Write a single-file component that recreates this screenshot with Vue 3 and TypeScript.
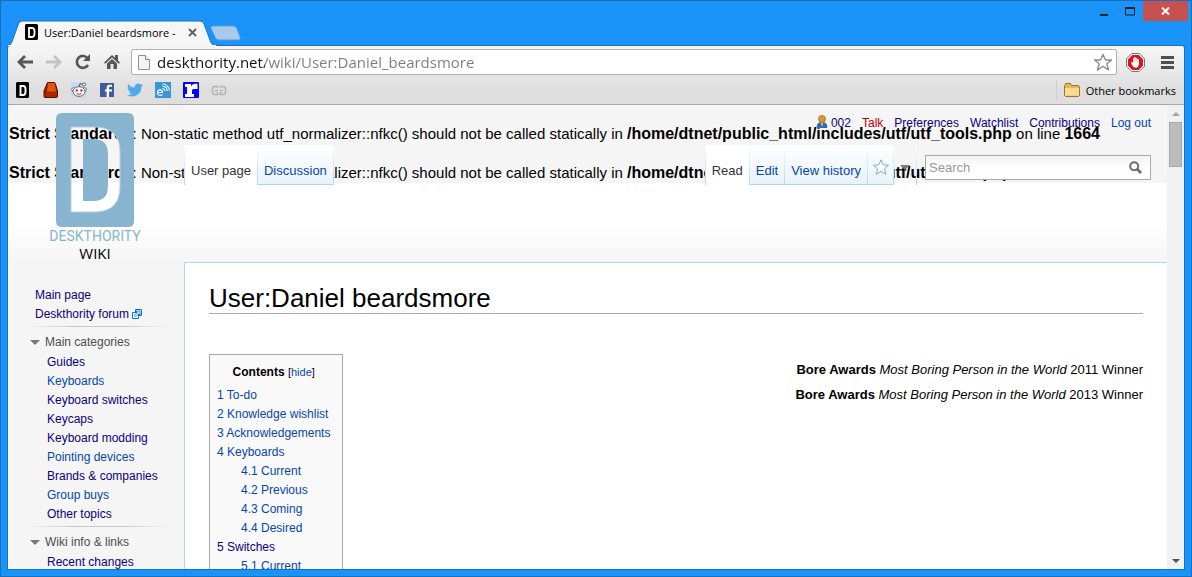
<script setup lang="ts">
import { ref } from 'vue'

interface LinkItem {
  label: string
  fresh?: boolean
}
interface TocItem {
  num: string
  label: string
  sub?: boolean
  visited?: boolean
}

const address = ref('deskthority.net/wiki/User:Daniel_beardsmore')
const query = ref('')

const notice = {
  title: 'Strict Standards',
  body: 'Non-static method utf_normalizer::nfkc() should not be called statically in',
  file: '/home/dtnet/public_html/includes/utf/utf_tools.php',
  line: '1664',
}

const topLinks: LinkItem[] = [{ label: 'Main page' }]

const categories: LinkItem[] = [
  { label: 'Guides' },
  { label: 'Keyboards', fresh: true },
  { label: 'Keyboard switches' },
  { label: 'Keycaps' },
  { label: 'Keyboard modding' },
  { label: 'Pointing devices', fresh: true },
  { label: 'Brands & companies' },
  { label: 'Group buys', fresh: true },
  { label: 'Other topics' },
]

const toc: TocItem[] = [
  { num: '1', label: 'To-do' },
  { num: '2', label: 'Knowledge wishlist' },
  { num: '3', label: 'Acknowledgements' },
  { num: '4', label: 'Keyboards' },
  { num: '4.1', label: 'Current', sub: true },
  { num: '4.2', label: 'Previous', sub: true },
  { num: '4.3', label: 'Coming', sub: true },
  { num: '4.4', label: 'Desired', sub: true },
  { num: '5', label: 'Switches', visited: true },
  { num: '5.1', label: 'Current', sub: true },
]

const awards = ['2011', '2013']
</script>

<template>
  <div class="window">
    <header class="titlebar">
      <div class="tab">
        <svg class="tab-shape" viewBox="0 0 208 26" preserveAspectRatio="none" aria-hidden="true">
          <path d="M0 26 C3 25 4 22 5 19 L10 5 C11 2 12 1 15 1 H191 C194 1 195 2 196 4 L202 20 C203 24 205 25 208 26 Z" fill="#f6f6f6" stroke="#1b6fb5" stroke-width="1" />
          <rect x="0" y="25" width="208" height="1" fill="#f6f6f6" />
        </svg>
        <svg class="favicon" width="13" height="16" viewBox="0 0 13 16" aria-hidden="true">
          <path d="M1 0H12L13 1V15L12 16H1L0 15V1Z" fill="#000" />
          <path d="M4 4H7C9 4 9.500 5 9.500 7V9.500C9.500 12 9 13 7 13H4Z" fill="none" stroke="#fff" stroke-width="1.800" />
        </svg>
        <span class="tab-title">User:Daniel beardsmore -</span>
        <button class="tab-close" aria-label="Close tab">
          <svg width="9" height="9" viewBox="0 0 9 9"><path d="M1 1L8 8M8 1L1 8" stroke="#5f5f5f" stroke-width="1.800" /></svg>
        </button>
      </div>
      <button class="new-tab" aria-label="New tab">
        <svg width="32" height="16" viewBox="0 0 32 16"><path d="M3 1H23C25 1 26 2 27 4L30 12C30.500 14 30 15 28 15H9C7 15 6 14 5 12L1 3C1 2 1.500 1 3 1Z" fill="#a9cae8" stroke="#5f9fd4" /></svg>
      </button>
      <div class="controls">
        <button aria-label="Minimize"><svg width="9" height="12" viewBox="0 0 9 12"><rect y="9" width="8" height="2" fill="#1e1e1e" /></svg></button>
        <button aria-label="Maximize"><svg width="10" height="9" viewBox="0 0 10 9"><path d="M.5 1H9.500V8H.5Z" fill="none" stroke="#1e1e1e" /><rect width="10" height="2" fill="#1e1e1e" /></svg></button>
        <button class="close" aria-label="Close"><svg width="9" height="8" viewBox="0 0 9 8"><path d="M1 .5L8 7.500M8 .5L1 7.500" stroke="#fff" stroke-width="2" /></svg></button>
      </div>
    </header>

    <div class="frame">
      <div class="toolbar">
        <button class="nav" aria-label="Back"><svg width="16" height="14" viewBox="0 0 16 14"><path d="M8 1L2 7L8 13M2 7H16" fill="none" stroke="#555" stroke-width="2.800" /></svg></button>
        <button class="nav" aria-label="Forward"><svg width="16" height="14" viewBox="0 0 16 14"><path d="M8 1L14 7L8 13M14 7H0" fill="none" stroke="#c3c3c3" stroke-width="2.800" /></svg></button>
        <button class="nav" aria-label="Reload"><svg width="16" height="16" viewBox="0 0 16 16"><path d="M12.800 4.500A6 6 0 1 0 13 11" fill="none" stroke="#555" stroke-width="2.600" /><path d="M15 0V7H8Z" fill="#555" /></svg></button>
        <button class="nav" aria-label="Home"><svg width="16" height="16" viewBox="0 0 16 16"><path d="M8 1L0 8.500L1.200 9.800L8 3.500L14.800 9.800L16 8.500L14 6.600V1H11V3.800Z" fill="#555" /><path d="M8 5L3 9.600V15H6.500V10H9.500V15H13V9.600Z" fill="#555" /></svg></button>
        <label class="omnibox">
          <svg width="12" height="15" viewBox="0 0 12 15" aria-hidden="true"><path d="M.5 .5H7.500L11.500 4.500V14.500H.5Z" fill="#f3f3f3" stroke="#8f8f8f" /><path d="M7.500 .5V4.500H11.500" fill="#fff" stroke="#8f8f8f" /></svg>
          <input v-model="address" type="text" aria-label="Address" spellcheck="false" />
          <svg width="20" height="19" viewBox="0 0 20 19" aria-hidden="true"><path d="M10 1.500L12.500 7H18.500L13.800 10.800L15.600 17L10 13.400L4.400 17L6.200 10.800L1.500 7H7.500Z" fill="#fff" stroke="#8b8b8b" stroke-width="1.400" stroke-linejoin="round" /></svg>
        </label>
        <button class="nav blocker" aria-label="Ad blocker">
          <svg width="19" height="19" viewBox="0 0 19 19"><path d="M5.700 .5H13.300L18.500 5.700V13.300L13.300 18.500H5.700L.5 13.300V5.700Z" fill="#f8f8f8" stroke="#777" /><path d="M6.300 2H12.700L17 6.300V12.700L12.700 17H6.300L2 12.700V6.300Z" fill="#d8141c" /><path d="M5 9.500L6.200 9L7 10V5.500L8 5L8.300 4.200H9.500L10 5H11L11.500 6H12.700L13 7V11.500L11.500 14.500H8L6 12Z" fill="#fff" /><path d="M8.400 5.500V9M10 5V9M11.500 6V9" stroke="#e88" stroke-width=".5" /></svg>
        </button>
        <button class="nav menu" aria-label="Menu"><svg width="13" height="13" viewBox="0 0 13 13"><path d="M0 1.500H13M0 6.500H13M0 11.500H13" stroke="#4f4f4f" stroke-width="3" /></svg></button>
      </div>

      <nav class="bookmarks" aria-label="Bookmarks">
        <a href="#" aria-label="Deskthority"><svg width="16" height="16" viewBox="0 0 16 16"><path d="M2 0H13L14 1V15L13 16H2L1 15V1Z" fill="#000" /><path d="M5.500 4H8C10 4 10.500 5 10.500 7V9.500C10.500 12 10 13 8 13H5.500Z" fill="none" stroke="#fff" stroke-width="1.900" /></svg></a>
        <a href="#" aria-label="Keycap"><svg width="16" height="16" viewBox="0 0 16 16"><path d="M4 1.500Q4 .5 5 .5H11Q12 .5 12.300 1.500L14.500 9V14.500Q14.500 15.500 13.500 15.500H2Q1 15.500 1 14.500V9Z" fill="#b02500" stroke="#471306" /><path d="M5 1H11.500L13 9.500H4Z" fill="#e4560d" /><path d="M4.500 1L1.500 9.500V13L4 9.500Z" fill="#8f1800" /></svg></a>
        <a href="#" aria-label="Reddit"><svg width="16" height="16" viewBox="0 0 16 16"><rect width="16" height="16" fill="#c5dbf0" /><path d="M8 5L9 1.500L12 2.500" fill="none" stroke="#555" /><circle cx="13" cy="2.500" r="1.500" fill="#fff" stroke="#555" stroke-width=".8" /><circle cx="2.500" cy="7.500" r="1.800" fill="#fff" stroke="#555" stroke-width=".8" /><circle cx="13.500" cy="7.500" r="1.800" fill="#fff" stroke="#555" stroke-width=".8" /><ellipse cx="8" cy="9.500" rx="6" ry="4.800" fill="#fff" stroke="#555" stroke-width=".9" /><circle cx="5.700" cy="8.500" r="1.300" fill="#f03030" /><circle cx="10.300" cy="8.500" r="1.300" fill="#f03030" /><path d="M5.500 11.500Q8 13 10.500 11.500" fill="none" stroke="#555" /></svg></a>
        <a href="#" aria-label="Facebook"><svg width="16" height="16" viewBox="0 0 16 16"><rect x="1" y="1" width="14" height="14" fill="#3f5c9d" /><path d="M10 15V9.500H13V7.500H10V6C10 5 10.500 4.700 11.300 4.700H13V2.700H10.500C8.500 2.700 7.700 4 7.700 5.500V7.500H6V9.500H7.700V15Z" fill="#fff" /></svg></a>
        <a href="#" aria-label="Twitter"><svg width="16" height="16" viewBox="0 0 24 24"><path d="M23.900 4.600a10 10 0 0 1-2.800.8 5 5 0 0 0 2.100-2.700c-1 .6-2 1-3.100 1.200a4.900 4.900 0 0 0-8.400 4.500A14 14 0 0 1 1.700 3.200a4.900 4.900 0 0 0 1.500 6.500 5 5 0 0 1-2.200-.6 4.900 4.900 0 0 0 3.900 4.900 5 5 0 0 1-2.200.1 4.900 4.900 0 0 0 4.600 3.400A9.900 9.900 0 0 1 0 19.500 14 14 0 0 0 21.500 7.100a10 10 0 0 0 2.400-2.500z" fill="#4fa9ea" /></svg></a>
        <a href="#" aria-label="Feed"><svg width="16" height="16" viewBox="0 0 16 16"><rect width="16" height="16" fill="#3795da" /><path d="M2.500 10.500H7.500C7.500 7 2.500 7 2.500 10.500C2.500 14 6 13.500 7.500 12.800M7.500 6.500A3 3 0 0 1 10 9M7.500 4A5.500 5.500 0 0 1 12.300 9M7.500 1.800A7.500 7.500 0 0 1 14.500 9" fill="none" stroke="#fff" stroke-width="1.100" /></svg></a>
        <a href="#" aria-label="Forum"><svg width="16" height="16" viewBox="0 0 16 16"><rect width="16" height="16" rx="1" fill="#0505f5" /><path d="M2 2H8V4.500C9 2.500 11 1.500 14.500 2V7H11C9.500 7 9 7.500 9 9V12H11V15H2V12H4V5H2Z" fill="#fff" /></svg></a>
        <a href="#" aria-label="Links"><svg width="16" height="16" viewBox="0 0 16 16"><path d="M6.500 6V4.500H3L1.500 6V11L3 12.500H6.500V10M4 8.500H7M9.500 6V4.500H13L14.500 6V11L13 12.500H9.500V10M9 8.500H12" fill="none" stroke="#b2b2b2" stroke-width="1.400" /></svg></a>
        <button class="other">
          <svg width="16" height="14" viewBox="0 0 16 14" aria-hidden="true"><path d="M.5 12.500V2.500L1.500 1.500V.5H6.500L7.500 2.500H14L15.500 3.500V12L14.500 13.500H1.500Z" fill="#e9b558" stroke="#9b7434" /><path d="M1 5H15V12.500H1Z" fill="#fbdc95" /></svg>
          Other bookmarks
        </button>
      </nav>

      <div class="viewport">
        <div class="page">
          <div class="notices">
            <p v-for="n in 2" :key="n">
              <b>{{ notice.title }}</b>: {{ notice.body }} <b>{{ notice.file }}</b> on line <b>{{ notice.line }}</b>
            </p>
          </div>
          <div class="base"></div>

          <div class="columns">
            <aside class="sidebar">
              <ul class="top-links">
                <li v-for="l in topLinks" :key="l.label"><a href="#">{{ l.label }}</a></li>
                <li>
                  <a href="#">Deskthority forum
                    <svg width="10" height="10" viewBox="0 0 10 10" aria-hidden="true"><path d="M3.500 .5H9.500V6.500H3.500Z" fill="#fff" stroke="#0d6fd8" /><path d="M.5 3.500H6.500V9.500H.5Z" fill="#fff" stroke="#0d6fd8" /><path d="M4 2H8V6L6.700 4.700L3.700 7.700L2.300 6.300L5.300 3.300Z" fill="#fff" stroke="#0d6fd8" stroke-width=".9" /></svg>
                  </a>
                </li>
              </ul>
              <section>
                <h2>Main categories</h2>
                <ul>
                  <li v-for="l in categories" :key="l.label"><a href="#" :class="{ fresh: l.fresh }">{{ l.label }}</a></li>
                </ul>
              </section>
              <section>
                <h2>Wiki info &amp; links</h2>
                <ul>
                  <li><a href="#">Recent changes</a></li>
                </ul>
              </section>
            </aside>

            <main class="content">
              <h1>User:Daniel beardsmore</h1>
              <div class="body">
                <div class="toc">
                  <div class="toc-title"><b>Contents</b> <small>[<a href="#">hide</a>]</small></div>
                  <ul>
                    <li v-for="t in toc" :key="t.num" :class="{ sub: t.sub }">
                      <a href="#" :class="{ visited: t.visited }">{{ t.num }} {{ t.label }}</a>
                    </li>
                  </ul>
                </div>
                <div class="awards">
                  <p v-for="year in awards" :key="year"><b>Bore Awards</b> <i>Most Boring Person in the World</i> {{ year }} Winner</p>
                </div>
              </div>
            </main>
          </div>

          <div class="head">
            <a href="#" class="logo" aria-label="Deskthority wiki">
              <svg width="78" height="114" viewBox="0 0 78 114" aria-hidden="true">
                <path fill-rule="evenodd" fill="#88b4cf" d="M6 0H72Q78 0 78 6V108Q78 114 72 114H6Q0 114 0 108V6Q0 0 6 0ZM15 14V99H38C56 99 64 90 64 73V39C64 23 56 14 38 14ZM27 26V88H37C48 88 52 83 52 72V42C52 31 48 26 37 26Z" />
                <path fill="none" stroke="#b5d0e1" d="M15 14V99H38C56 99 64 90 64 73V39C64 23 56 14 38 14Z" />
              </svg>
              <span class="brand">DESKTHORITY</span>
              <span class="wiki">WIKI</span>
            </a>
            <div class="head-main">
              <nav class="personal">
                <a href="#" class="me">
                  <svg width="12" height="14" viewBox="0 0 12 14" aria-hidden="true"><path d="M1 13C0 10 2 7 6 7S12 10 11 13Z" fill="#3568a5" /><path d="M5 8L6 12L7 8Z" fill="#dce8f4" /><circle cx="6" cy="4" r="3.500" fill="#dd9a35" stroke="#a56c19" stroke-width=".8" /></svg>
                  002
                </a>
                <a href="#" class="missing">Talk</a>
                <a href="#">Preferences</a>
                <a href="#">Watchlist</a>
                <a href="#">Contributions</a>
                <a href="#" class="fresh">Log out</a>
              </nav>
              <div class="tabs">
                <a href="#" class="selected first">User page</a>
                <a href="#">Discussion</a>
                <span class="spacer"></span>
                <a href="#" class="selected first">Read</a>
                <a href="#">Edit</a>
                <a href="#">View history</a>
                <a href="#" class="star" aria-label="Watch"><svg width="16" height="16" viewBox="0 0 16 16"><path d="M8 .8L10.200 5.800L15.500 6.300L11.500 9.800L12.700 15.200L8 12.400L3.300 15.200L4.500 9.800L.5 6.300L5.800 5.800Z" fill="#fff" stroke="#7aa9bd" stroke-linejoin="round" /></svg></a>
                <button class="more" aria-label="More"><svg width="10" height="5" viewBox="0 0 10 5"><path d="M0 0H10L5 5Z" fill="#797979" /></svg></button>
                <form class="search" @submit.prevent>
                  <input v-model="query" type="text" placeholder="Search" aria-label="Search" />
                  <button aria-label="Go"><svg width="13" height="13" viewBox="0 0 13 13"><circle cx="5.200" cy="5.200" r="4" fill="none" stroke="#6c6c6c" stroke-width="2" /><path d="M8 8L12 12" stroke="#6c6c6c" stroke-width="2.600" /></svg></button>
                </form>
              </div>
            </div>
          </div>
        </div>

        <div class="scrollbar">
          <button aria-label="Scroll up"><svg width="8" height="4" viewBox="0 0 8 4"><path d="M4 0L8 4H0Z" fill="#a3a3a3" /></svg></button>
          <div class="thumb"></div>
          <button aria-label="Scroll down"><svg width="8" height="4" viewBox="0 0 8 4"><path d="M0 0H8L4 4Z" fill="#505050" /></svg></button>
        </div>
      </div>
    </div>
  </div>
</template>

<style>
body {
  margin: 0;
  overflow: hidden;
}
</style>

<style scoped>
* {
  box-sizing: border-box;
}
button {
  border: 0;
  padding: 0;
  background: none;
  font: inherit;
  color: inherit;
}
svg {
  display: block;
  flex: none;
}
a {
  color: #0645ad;
  text-decoration: none;
}
ul {
  list-style: none;
  margin: 0;
  padding: 0;
}
p {
  margin: 0;
}
.window {
  height: 100vh;
  display: flex;
  flex-direction: column;
  background: #1a94fa;
  border: 1px solid #1a70b8;
  padding: 0 6px 6px;
  font-family: "Segoe UI", "Open Sans", sans-serif;
  font-size: 11px;
  color: #000;
}
.titlebar {
  height: 44px;
  display: flex;
  align-items: flex-end;
  flex: none;
}
.tab {
  position: relative;
  width: 208px;
  height: 26px;
  margin-left: 1px;
  margin-bottom: -1px;
  padding: 0 19px 2px 17px;
  display: flex;
  align-items: center;
  z-index: 1;
}
.tab-shape {
  position: absolute;
  inset: 0;
  width: 100%;
  height: 100%;
}
.favicon,
.tab-title,
.tab-close {
  position: relative;
}
.tab-title {
  flex: 1;
  margin-left: 6px;
  white-space: nowrap;
}
.new-tab {
  margin: 0 0 4px -6px;
}
.controls {
  align-self: flex-start;
  margin-left: auto;
  margin-right: -3px;
  display: flex;
  height: 20px;
}
.controls button {
  width: 26px;
  display: grid;
  place-items: center;
}
.controls .close {
  width: 45px;
  background: #c75050;
}
.frame {
  flex: 1;
  min-height: 0;
  display: flex;
  flex-direction: column;
  border: 1px solid #1b6fb5;
  border-radius: 3px 3px 0 0;
  background: linear-gradient(#f6f6f6, #dedede 45px);
}
.toolbar {
  height: 32px;
  flex: none;
  display: flex;
  align-items: center;
  padding: 0 10px 0 9px;
  gap: 13px;
}
.nav:nth-child(4) {
  margin-right: -2px;
}
.omnibox {
  flex: 1;
  height: 26px;
  display: flex;
  align-items: center;
  gap: 7px;
  padding: 0 3px 0 6px;
  border: 1px solid #b0b0b0;
  border-radius: 2px;
  background: #fff;
}
.omnibox input {
  flex: 1;
  min-width: 0;
  border: 0;
  padding: 0;
  outline: 0;
  font: 15px/22px "Segoe UI", "Open Sans", sans-serif;
  color: transparent;
  background: linear-gradient(90deg, #111 108px, #7c7c7c 108px);
  background-clip: text;
  -webkit-background-clip: text;
}
.blocker {
  margin-left: -4px;
}
.menu {
  margin-left: 3px;
}
.bookmarks {
  height: 27px;
  flex: none;
  display: flex;
  align-items: center;
  gap: 12px;
  padding: 0 8px 2px 7px;
  border-bottom: 1px solid #aaa8ab;
}
.other {
  display: flex;
  align-items: center;
  gap: 6px;
  height: 20px;
  margin-left: auto;
  padding-left: 7px;
  border-left: 1px solid #c5d0d8;
}
.viewport {
  flex: 1;
  min-height: 0;
  display: flex;
  background: #f5f5f5;
  font-family: "Liberation Sans", Arial, sans-serif;
  font-size: 12px;
}
.page {
  position: relative;
  flex: 1;
  min-width: 0;
  overflow: hidden;
}
.notices {
  height: 78px;
  padding: 19px 1px 0;
  overflow: hidden;
  white-space: nowrap;
  font-size: 15px;
  line-height: 19px;
}
.notices b {
  font-size: 16px;
}
.notices p + p {
  margin-top: 20px;
}
.base {
  height: 79px;
  background: linear-gradient(#fff 50%, #f5f5f5);
}
.columns {
  display: grid;
  grid-template-columns: 176px 1fr;
}
.sidebar {
  padding: 24px 14px 0 19px;
  line-height: 19px;
  white-space: nowrap;
}
.sidebar a,
.personal a {
  color: #0b0080;
}
.sidebar a.fresh,
.personal a.fresh {
  color: #0645ad;
}
.sidebar .top-links {
  padding-left: 8px;
}
.top-links svg {
  display: inline-block;
  vertical-align: -1px;
}
.sidebar section {
  margin-top: 2px;
  padding-top: 7px;
  background: linear-gradient(90deg, transparent, #c8c8c8 33%, #c8c8c8 66%, transparent) no-repeat 0 0 / 100% 1px;
}
.sidebar h2 {
  display: flex;
  align-items: center;
  gap: 5px;
  margin: 0 0 1px 3px;
  font-size: 12px;
  font-weight: normal;
  color: #4d4d4d;
}
.sidebar h2::before {
  content: "";
  border: 5px solid transparent;
  border-top-color: #797979;
  border-bottom: 0;
}
.sidebar section ul {
  padding-left: 20px;
}
.content {
  background: #fff;
  border: 1px solid #a7d7f9;
  border-right: 0;
  padding: 20px 24px 24px;
}
h1 {
  margin: 0 0 40px;
  border-bottom: 1px solid #aaa;
  font-size: 26px;
  line-height: 30px;
  font-weight: normal;
}
.body {
  display: flex;
  justify-content: space-between;
  align-items: flex-start;
}
.toc {
  border: 1px solid #aaa;
  background: #f9f9f9;
  padding: 8px 12px 8px 7px;
  line-height: 19px;
}
.toc-title {
  text-align: center;
  margin-bottom: 4px;
}
.toc-title small {
  font-size: 11px;
}
.toc .sub {
  padding-left: 24px;
}
.toc .visited {
  color: #0b0080;
}
.awards {
  font-size: 13px;
  line-height: 19px;
  padding-top: 6px;
  text-align: right;
}
.awards p + p {
  margin-top: 6px;
}
.head {
  position: absolute;
  inset: 0 0 auto 0;
  display: flex;
}
.logo {
  width: 176px;
  flex: none;
  display: flex;
  flex-direction: column;
  align-items: center;
  padding: 8px 2px 0 0;
  color: #88b4cf;
}
.brand {
  font-family: "Liberation Sans Narrow", Roboto, sans-serif;
  font-size: 14px;
  line-height: 18px;
}
.wiki {
  font-family: "Open Sans", sans-serif;
  font-size: 15px;
  line-height: 16px;
  color: #000;
}
.head-main {
  flex: 1;
  min-width: 0;
  padding-right: 16px;
}
.personal {
  height: 40px;
  display: flex;
  justify-content: flex-end;
  gap: 11px;
  padding-top: 10px;
  line-height: 16px;
}
.personal .me {
  display: flex;
  gap: 3px;
}
.personal .missing {
  color: #ba0000;
}
.tabs {
  height: 40px;
  display: flex;
  font-size: 13px;
}
.tabs > a,
.more {
  padding: 16px 6px 0 6px;
  line-height: 19px;
  border-right: 1px solid;
  border-image: linear-gradient(#fff, #a7d7f9) 1;
}
.tabs > a {
  background: linear-gradient(#a7d7f9, #a7d7f9) no-repeat 0 100% / 100% 1px, linear-gradient(#fff, #e8f2f8);
}
.tabs > a.selected {
  background: #fff;
  color: #333;
}
.tabs > a.first {
  border-left: 1px solid;
}
.spacer {
  flex: 1;
}
.tabs > .star {
  padding: 14px 4px 0 5px;
}
.more {
  display: flex;
  align-items: flex-start;
  padding-top: 20px;
}
.search {
  width: 226px;
  height: 25px;
  margin: 10px 0 0 8px;
  display: flex;
  align-items: center;
  padding: 0 8px 0 3px;
  border: 1px solid #aaa;
  background: linear-gradient(#f3f3f3, #fff 50%);
}
.search input {
  flex: 1;
  min-width: 0;
  border: 0;
  padding: 0;
  outline: 0;
  background: none;
  font: inherit;
}
.search input::placeholder {
  color: #999;
}
.scrollbar {
  width: 17px;
  flex: none;
  display: flex;
  flex-direction: column;
  padding: 0 2px;
  background: #f1f1f1;
}
.scrollbar button {
  height: 17px;
  display: grid;
  place-items: center;
}
.scrollbar button:last-child {
  margin-top: auto;
}
.thumb {
  height: 45px;
  background: #bcbcbc;
  border: 1px solid #a8a8a8;
}
</style>
